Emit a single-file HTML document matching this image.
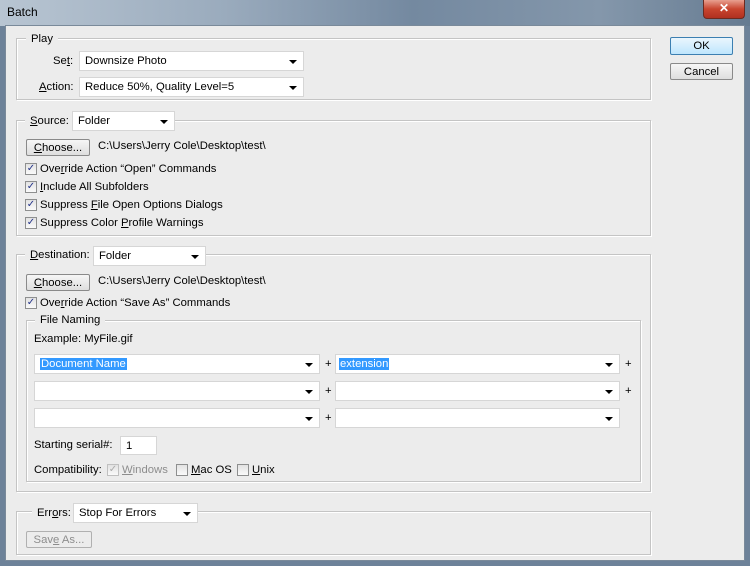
<!DOCTYPE html>
<html><head><meta charset="utf-8"><style>
*{box-sizing:border-box;margin:0;padding:0}
body{width:750px;height:566px;overflow:hidden;font-family:"Liberation Sans",sans-serif;font-size:11.3px;line-height:15px;color:#000;background:#6d8299;position:relative}
.a{position:absolute}
.title{left:0;top:0;width:750px;height:26px;background:linear-gradient(90deg,#b8c5d2 0%,#9aabbd 30%,#7489a0 55%,#8497ab 80%,#667b91 100%)}
.tt{left:7px;top:5px;font-size:12px;color:#000}
.close{left:703px;top:0;width:42px;height:19px;background:linear-gradient(#e8a090,#c8452f 50%,#b03020);border:1px solid #6b2a20;border-top:none;border-radius:0 0 4px 4px;color:#fff;font-weight:bold;text-align:center;font-size:12px;line-height:17px}
.win{left:5px;top:25px;width:740px;height:536px;background:#ececec;border:1px solid #7a8a9a}
.grp{border:1px solid #c4c4c4;box-shadow:1px 1px 0 #fff inset,1px 1px 0 #fff}
.leg{background:#ececec;padding:0 5px;line-height:15px}
.sel{background:#fff;border:1px solid #d6d6d6;height:20px;line-height:19px;padding-left:5px}
.sel:after{content:"";position:absolute;right:6px;top:8px;border-left:4px solid transparent;border-right:4px solid transparent;border-top:4px solid #000}
.btn{border:1px solid #8a8a8a;border-radius:2px;background:linear-gradient(#f6f6f6,#dedede);text-align:center;line-height:16px}
.cb{width:12px;height:12px;border:1px solid #8e8f8f;background:linear-gradient(#e2e2e2,#fafafa);font-size:10px;line-height:10px;text-align:center;color:#24348a}
.hl{background:#3399ff;color:#fff;padding:0 1px}
u{text-decoration:underline}
</style></head><body>
<div class="a title"></div><div class="a tt">Batch</div>
<div class="a close">✕</div>
<div class="a win"></div>

<div class="a btn" style="left:670px;top:37px;width:63px;height:18px;border-color:#3c7fb1;background:linear-gradient(#eaf6fd,#bee6fd)">OK</div>
<div class="a btn" style="left:670px;top:63px;width:63px;height:17px">Cancel</div>

<div class="a grp" style="left:16px;top:38px;width:635px;height:62px"></div>
<div class="a leg" style="left:26px;top:32px">Play</div>
<div class="a" style="left:53px;top:54px">Se<u>t</u>:</div>
<div class="a sel" style="left:79px;top:51px;width:225px">Downsize Photo</div>
<div class="a" style="left:39px;top:80px"><u>A</u>ction:</div>
<div class="a sel" style="left:79px;top:77px;width:225px">Reduce 50%, Quality Level=5</div>

<div class="a grp" style="left:16px;top:120px;width:635px;height:116px"></div>
<div class="a leg" style="left:25px;top:114px;width:47px;height:15px"><u>S</u>ource:</div>
<div class="a sel" style="left:72px;top:111px;width:103px">Folder</div>
<div class="a btn" style="left:26px;top:139px;width:64px;height:17px"><u>C</u>hoose...</div>
<div class="a" style="left:98px;top:139px">C:\Users\Jerry Cole\Desktop\test\</div>
<div class="a cb" style="left:25px;top:163px">✓</div><div class="a" style="left:40px;top:162px">Ove<u>r</u>ride Action “Open” Commands</div>
<div class="a cb" style="left:25px;top:181px">✓</div><div class="a" style="left:40px;top:180px"><u>I</u>nclude All Subfolders</div>
<div class="a cb" style="left:25px;top:199px">✓</div><div class="a" style="left:40px;top:198px">Suppress <u>F</u>ile Open Options Dialogs</div>
<div class="a cb" style="left:25px;top:217px">✓</div><div class="a" style="left:40px;top:216px">Suppress Color <u>P</u>rofile Warnings</div>

<div class="a grp" style="left:16px;top:254px;width:635px;height:238px"></div>
<div class="a leg" style="left:25px;top:248px;width:68px;height:15px"><u>D</u>estination:</div>
<div class="a sel" style="left:93px;top:246px;width:113px">Folder</div>
<div class="a btn" style="left:26px;top:274px;width:64px;height:17px"><u>C</u>hoose...</div>
<div class="a" style="left:98px;top:274px">C:\Users\Jerry Cole\Desktop\test\</div>
<div class="a cb" style="left:25px;top:297px">✓</div><div class="a" style="left:40px;top:296px">Ove<u>r</u>ride Action “Save As” Commands</div>

<div class="a grp" style="left:26px;top:320px;width:615px;height:162px"></div>
<div class="a leg" style="left:35px;top:313px">File Naming</div>
<div class="a" style="left:34px;top:332px">Example: MyFile.gif</div>
<div class="a sel" style="left:34px;top:354px;width:286px"><span class="hl">Document Name</span></div>
<div class="a" style="left:325px;top:357px">+</div>
<div class="a sel" style="left:335px;top:354px;width:285px;padding-left:3px"><span class="hl">extension</span></div>
<div class="a" style="left:625px;top:357px">+</div>
<div class="a sel" style="left:34px;top:381px;width:286px"></div>
<div class="a" style="left:325px;top:384px">+</div>
<div class="a sel" style="left:335px;top:381px;width:285px"></div>
<div class="a" style="left:625px;top:384px">+</div>
<div class="a sel" style="left:34px;top:408px;width:286px"></div>
<div class="a" style="left:325px;top:411px">+</div>
<div class="a sel" style="left:335px;top:408px;width:285px"></div>
<div class="a" style="left:34px;top:438px">Starting serial#:</div>
<div class="a" style="left:120px;top:436px;width:37px;height:19px;background:#fff;border:1px solid #d6d6d6;padding-left:5px;line-height:18px">1</div>
<div class="a" style="left:34px;top:463px">Compatibility:</div>
<div class="a cb" style="left:107px;top:464px;color:#aaa;border-color:#c0c0c0">✓</div><div class="a" style="left:122px;top:463px;color:#8d8d8d"><u>W</u>indows</div>
<div class="a cb" style="left:176px;top:464px"></div><div class="a" style="left:191px;top:463px"><u>M</u>ac OS</div>
<div class="a cb" style="left:237px;top:464px"></div><div class="a" style="left:252px;top:463px"><u>U</u>nix</div>

<div class="a grp" style="left:16px;top:511px;width:635px;height:44px"></div>
<div class="a leg" style="left:32px;top:506px;width:41px;height:15px">Err<u>o</u>rs:</div>
<div class="a sel" style="left:73px;top:503px;width:125px">Stop For Errors</div>
<div class="a btn" style="left:26px;top:531px;width:66px;height:17px;color:#8d8d8d;border-color:#b0b0b0;background:#ececec">Sav<u>e</u> As...</div>
</body></html>
